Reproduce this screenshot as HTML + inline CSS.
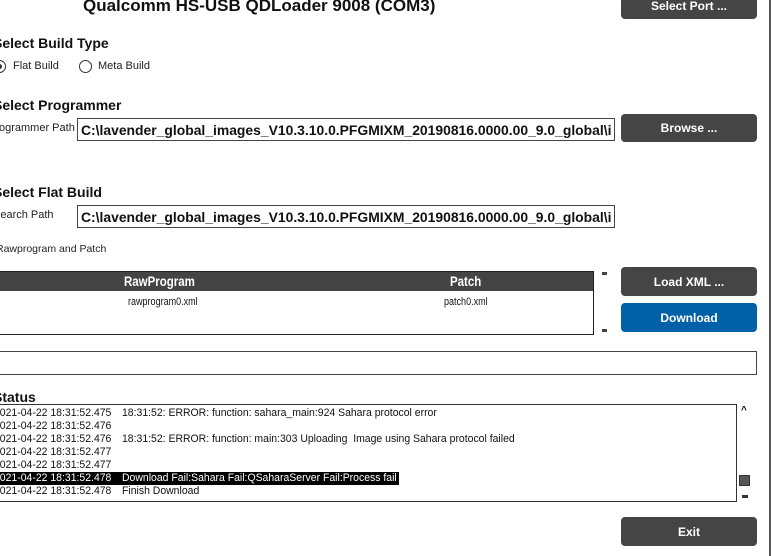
<!DOCTYPE html>
<html><head><meta charset="utf-8"><style>
*{margin:0;padding:0;box-sizing:border-box}
body{width:771px;height:556px;background:#fff;position:relative;overflow:hidden;font-family:"Liberation Sans",sans-serif;color:#111}
.a{position:absolute;white-space:nowrap}
.h{font-weight:bold;font-size:14px}
.s{font-size:11px;color:#222}
.btn{position:absolute;left:621px;width:136px;background:#454545;border-radius:4px;color:#fff;font-weight:bold;font-size:12px;text-align:center;display:flex;align-items:center;justify-content:center}
.inp{position:absolute;left:77px;width:538px;height:23px;border:1px solid #444;font-weight:bold;font-size:13.9px;padding:3px 0 0 3px;overflow:hidden;white-space:nowrap}
.n{display:inline-block;transform:scaleX(.82);transform-origin:left}
.m{display:inline-block;transform:scaleX(.95);transform-origin:left}
.log{position:absolute;font-size:11px;line-height:13px;white-space:nowrap}
</style></head><body>
<div class="a" style="left:769px;top:0;width:2px;height:556px;background:#555"></div>
<div class="a" style="left:83px;top:-4px;font-size:17px;font-weight:bold">Qualcomm HS-USB QDLoader 9008 (COM3)</div>
<div class="btn" style="top:-10px;height:29px;padding-top:3px">Select Port ...</div>
<div class="a h" style="left:-7px;top:35px">Select Build Type</div>
<div class="a" style="left:-7px;top:60px;width:13px;height:13px;border:1px solid #333;border-radius:50%"></div>
<div class="a" style="left:-3px;top:64px;width:5px;height:5px;background:#333;border-radius:50%"></div>
<div class="a s" style="left:13px;top:60px">Flat Build</div>
<div class="a" style="left:79px;top:60px;width:13px;height:13px;border:1px solid #333;border-radius:50%"></div>
<div class="a s" style="left:98px;top:60px">Meta Build</div>
<div class="a h" style="left:-7px;top:97px">Select Programmer</div>
<div class="a s" style="left:-12px;top:122px">Programmer Path</div>
<div class="inp" style="top:118px">C:\lavender_global_images_V10.3.10.0.PFGMIXM_20190816.0000.00_9.0_global\i</div>
<div class="btn" style="top:114px;height:28px">Browse ...</div>
<div class="a h" style="left:-7px;top:184px">Select Flat Build</div>
<div class="a s" style="left:-7px;top:209px">Search Path</div>
<div class="inp" style="top:205px">C:\lavender_global_images_V10.3.10.0.PFGMIXM_20190816.0000.00_9.0_global\i</div>
<div class="a s" style="left:-4px;top:243px;font-size:10.5px">Rawprogram and Patch</div>
<div class="a" style="left:-2px;top:271px;width:596px;height:64px;border:1px solid #222"></div>
<div class="a" style="left:-1px;top:272px;width:594px;height:19px;background:#444"></div>
<div class="a" style="left:124px;top:273px;color:#fff;font-weight:bold;font-size:14px"><span class="n">RawProgram</span></div>
<div class="a" style="left:450px;top:273px;color:#fff;font-weight:bold;font-size:14px"><span class="n">Patch</span></div>
<div class="a" style="left:128px;top:296px;font-size:11px"><span class="n">rawprogram0.xml</span></div>
<div class="a" style="left:444px;top:296px;font-size:11px"><span class="n">patch0.xml</span></div>
<div class="a" style="left:602px;top:272px;width:5px;height:3px;background:#444"></div>
<div class="a" style="left:602px;top:329px;width:5px;height:3px;background:#444"></div>
<div class="btn" style="top:267px;height:29px">Load XML ...</div>
<div class="btn" style="top:303px;height:29px;background:#0060a8">Download</div>
<div class="a" style="left:-2px;top:351px;width:759px;height:24px;border:1px solid #444"></div>
<div class="a h" style="left:-7px;top:389px">Status</div>
<div class="a" style="left:-2px;top:404px;width:739px;height:98px;border:1px solid #333"></div>
<div class="a" style="left:0;top:472px;width:399px;height:13px;background:#000"></div>
<div class="log" style="top:407px;left:-6px"><span class="m">2021-04-22 18:31:52.475</span></div>
<div class="log" style="top:407px;left:122px"><span class="m">18:31:52: ERROR: function: sahara_main:924 Sahara protocol error</span></div>
<div class="log" style="top:420px;left:-6px"><span class="m">2021-04-22 18:31:52.476</span></div>
<div class="log" style="top:433px;left:-6px"><span class="m">2021-04-22 18:31:52.476</span></div>
<div class="log" style="top:433px;left:122px"><span class="m">18:31:52: ERROR: function: main:303 Uploading &nbsp;Image using Sahara protocol failed</span></div>
<div class="log" style="top:446px;left:-6px"><span class="m">2021-04-22 18:31:52.477</span></div>
<div class="log" style="top:459px;left:-6px"><span class="m">2021-04-22 18:31:52.477</span></div>
<div class="log" style="top:472px;left:-6px;color:#fff"><span class="m">2021-04-22 18:31:52.478</span></div>
<div class="log" style="top:472px;left:122px;color:#fff"><span class="m">Download Fail:Sahara Fail:QSaharaServer Fail:Process fail</span></div>
<div class="log" style="top:485px;left:-6px"><span class="m">2021-04-22 18:31:52.478</span></div>
<div class="log" style="top:485px;left:122px"><span class="m">Finish Download</span></div>
<div class="a" style="left:741px;top:405px;font-size:10px;font-weight:bold">^</div>
<div class="a" style="left:739px;top:475px;width:11px;height:11px;background:#555;border:1px solid #333"></div>
<div class="a" style="left:742px;top:495px;width:6px;height:3px;background:#333"></div>
<div class="btn" style="top:517px;height:29px">Exit</div>
</body></html>
